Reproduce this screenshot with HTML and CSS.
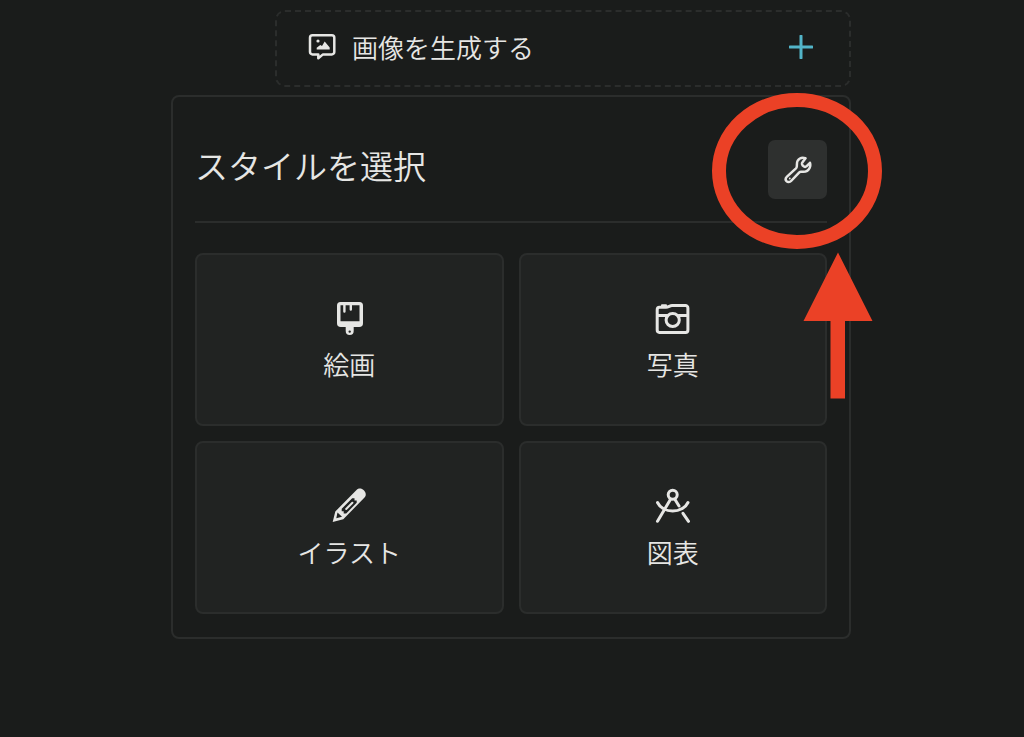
FILE: index.html
```html
<!DOCTYPE html>
<html lang="ja">
<head>
    <meta charset="UTF-8">
    <meta name="viewport" content="width=device-width, initial-scale=1.0">
    <title>スタイルを選択</title>
    <link rel="stylesheet" href="styles.css">
</head>
<body>
    <main class="container">
        <button type="button" class="generate">
            <svg class="generate-icon" viewBox="0 0 28 28" aria-hidden="true">
                <path class="line" d="M4.5 2.2h19.3a2.5 2.5 0 0 1 2.5 2.5v14.2a2.5 2.5 0 0 1-2.5 2.5H15l-4.7 3.8v-3.8H4.5A2.5 2.5 0 0 1 2 18.900V4.700a2.500 2.500 0 0 1 2.500-2.500z"/>
                <circle class="solid" cx="10" cy="8" r="1.6"/>
                <path class="solid" d="M8.700 16.500v-1.700l3.600-2.800 1.700 1 2.700-4.400 5 6v1.900z"/>
            </svg>
            <span class="generate-label">画像を生成する</span>
            <svg class="plus-icon" viewBox="0 0 24 24" aria-hidden="true">
                <path d="M12 1v22M1 12h22"/>
            </svg>
        </button>

        <section class="panel">
            <header class="panel-header">
                <h2>スタイルを選択</h2>
                <button type="button" class="settings" aria-label="設定">
                    <svg viewBox="0 0 28 28" aria-hidden="true">
                        <path class="line" d="M21.500 2.200C18.500 1.300 15.300 2.200 13.700 4.700c-1.300 2.100-.5 4.600-1 6.300-.2.700-.5 1.200-1 1.700L3 20.700c-1.500 1.400-1.600 3.300-.5 4.500 1.200 1.200 3.300 1.200 4.600-.2l8.200-8.700c.6-.6 1.300-.7 2.200-.6 3.600.5 6.700-.7 8.100-3.700.8-1.700.9-3.500.4-5.200l-3.600 3.600c-.6.500-1.600.600-2.500.100-1-.6-1.700-1.500-1.900-2.500-.1-.7.100-1.200.500-1.700z"/>
                        <circle class="solid" cx="5.800" cy="22.500" r="0.900"/>
                    </svg>
                </button>
            </header>

            <div class="styles">
                <button type="button" class="card">
                    <svg viewBox="0 0 36 36" aria-hidden="true">
                        <path class="solid" fill-rule="evenodd" d="M9.500 2h19A3.500 3.500 0 0 1 32 5.500v17.700a3.800 3.800 0 0 1-3.800 3.800h-5.500v4a4 4 0 0 1-8 0v-4H9.800A3.800 3.800 0 0 1 6 23.200V5.500A3.500 3.500 0 0 1 9.500 2zM9.500 5.200V21.200h19V5.200h-7.500V9.500a1.200 1.200 0 0 1-2.400 0V5.200h-4V11.500a1.200 1.200 0 0 1-2.400 0V5.200zM18.700 30.400a1.200 1.200 0 1 0 0 2.400 1.200 1.200 0 0 0 0-2.400z"/>
                    </svg>
                    <span>絵画</span>
                </button>
                <button type="button" class="card">
                    <svg viewBox="0 0 36 36" aria-hidden="true">
                        <path class="line" d="M4.500 7.300H11c2.500 0 3.800-1.700 6-1.700h13.500a2.400 2.400 0 0 1 2.400 2.400v22a2.400 2.400 0 0 1-2.400 2.400h-26A2.400 2.400 0 0 1 2.200 30V9.700a2.400 2.400 0 0 1 2.300-2.400zM2.200 15.500h9.500M23.700 15.500h9.200"/>
                        <path class="solid" d="M6 7V5.300a1 1 0 0 1 1-1h4a1 1 0 0 1 1 1V7z"/>
                        <circle class="line" cx="17.700" cy="20" r="6.600"/>
                    </svg>
                    <span>写真</span>
                </button>
                <button type="button" class="card">
                    <svg viewBox="0 0 36 36" aria-hidden="true">
                        <path class="solid" fill-rule="evenodd" d="M1.700 33.900 4.300 23.500 25.500 2C27.600 0 30.500 0 32.800 2.200s2.700 5.400.500 7.600L12.300 31.200zM6.500 24.500l-1.200 5.700 5.700-1.400zM10.700 20.700v2.500h2v2.200h2.500L25.700 14.800v-2.300h-2.200v-2.200h-2.300z"/>
                        <path class="lead" d="M15.200 21 21.400 14.700"/>
                    </svg>
                    <span>イラスト</span>
                </button>
                <button type="button" class="card">
                    <svg viewBox="0 0 36 36" aria-hidden="true">
                        <circle class="line" cx="17.700" cy="6.700" r="4.500"/>
                        <path class="line" d="M15.400 11.500 2.500 33.300M20 11.500l4 6.500M28 25.300l5.500 8M2.500 14.500C5 19.800 11 23 17.700 23S30.500 19.800 33 14.500"/>
                    </svg>
                    <span>図表</span>
                </button>
            </div>

            <!-- callout over the settings button -->
            <svg class="callout" viewBox="0 0 172 308" aria-hidden="true">
                <ellipse cx="85" cy="78" rx="78" ry="71"/>
                <path d="M126 159.500 160.500 228H133v77.500h-14.500V228H91.500z"/>
            </svg>
        </section>
    </main>
</body>
</html>
```

FILE: styles.css
```css
* {
    box-sizing: border-box;
}
body {
    margin: 0;
    padding: 10px 2px 10px 0;
    background: #1a1c1b;
    color: #e6e6e4;
    font-family: "Noto Sans CJK JP", sans-serif;
    font-weight: 350;
}
button {
    margin: 0;
    font: inherit;
    color: inherit;
    cursor: pointer;
}
svg {
    display: block;
    flex: none;
}
.container {
    display: flex;
    flex-direction: column;
    gap: 8px;
    max-width: 680px;
    margin: 0 auto;
}

.line {
    fill: none;
    stroke: #e6e6e4;
    stroke-width: 3;
    stroke-linecap: round;
    stroke-linejoin: round;
}
.solid {
    fill: #e6e6e4;
}

.generate {
    display: flex;
    align-items: center;
    gap: 16px;
    margin-left: 104px;
    padding: 16px 36px 20px 31px;
    background: none;
    border: 2px dashed #2b2d2c;
    border-radius: 10px;
    font-size: 26px;
    line-height: 37px;
}
.generate-icon {
    width: 28px;
    height: 28px;
}
.generate-icon .line,
.settings .line {
    stroke-width: 2.5;
}
.generate-label {
    flex: 1;
    text-align: left;
}
.plus-icon {
    width: 24px;
    height: 24px;
    fill: none;
    stroke: #52b4c8;
    stroke-width: 3;
    stroke-linecap: round;
}

.panel {
    position: relative;
    padding: 0 22px 23px;
    border: 2px solid #2b2d2c;
    border-radius: 8px;
}
.panel-header {
    display: flex;
    align-items: flex-start;
    justify-content: space-between;
    margin-bottom: 30px;
    padding: 43px 0 22px;
    border-bottom: 2px solid #2b2d2c;
}
.panel-header h2 {
    margin: 0;
    font-size: 33px;
    line-height: 50px;
    font-weight: 350;
}
.settings {
    display: grid;
    place-items: center;
    width: 59px;
    height: 59px;
    padding: 0;
    background: #2e302f;
    border: 0;
    border-radius: 7px;
}
.settings svg {
    width: 28px;
    height: 28px;
}

.styles {
    display: grid;
    grid-template-columns: 1fr 1fr;
    gap: 15px;
}
.card {
    display: flex;
    flex-direction: column;
    align-items: center;
    gap: 11px;
    padding: 45px 16px 43px;
    background: #212322;
    border: 2px solid #2b2d2c;
    border-radius: 8px;
    font-size: 26px;
    line-height: 34px;
}
.card svg {
    width: 36px;
    height: 36px;
}
.lead {
    fill: none;
    stroke: #e6e6e4;
    stroke-width: 2;
    stroke-linecap: round;
}

.callout {
    position: absolute;
    top: -4px;
    right: -35px;
    width: 172px;
    height: 308px;
    pointer-events: none;
}
.callout ellipse {
    fill: none;
    stroke: #eb4126;
    stroke-width: 14;
}
.callout path {
    fill: #eb4126;
}
```
